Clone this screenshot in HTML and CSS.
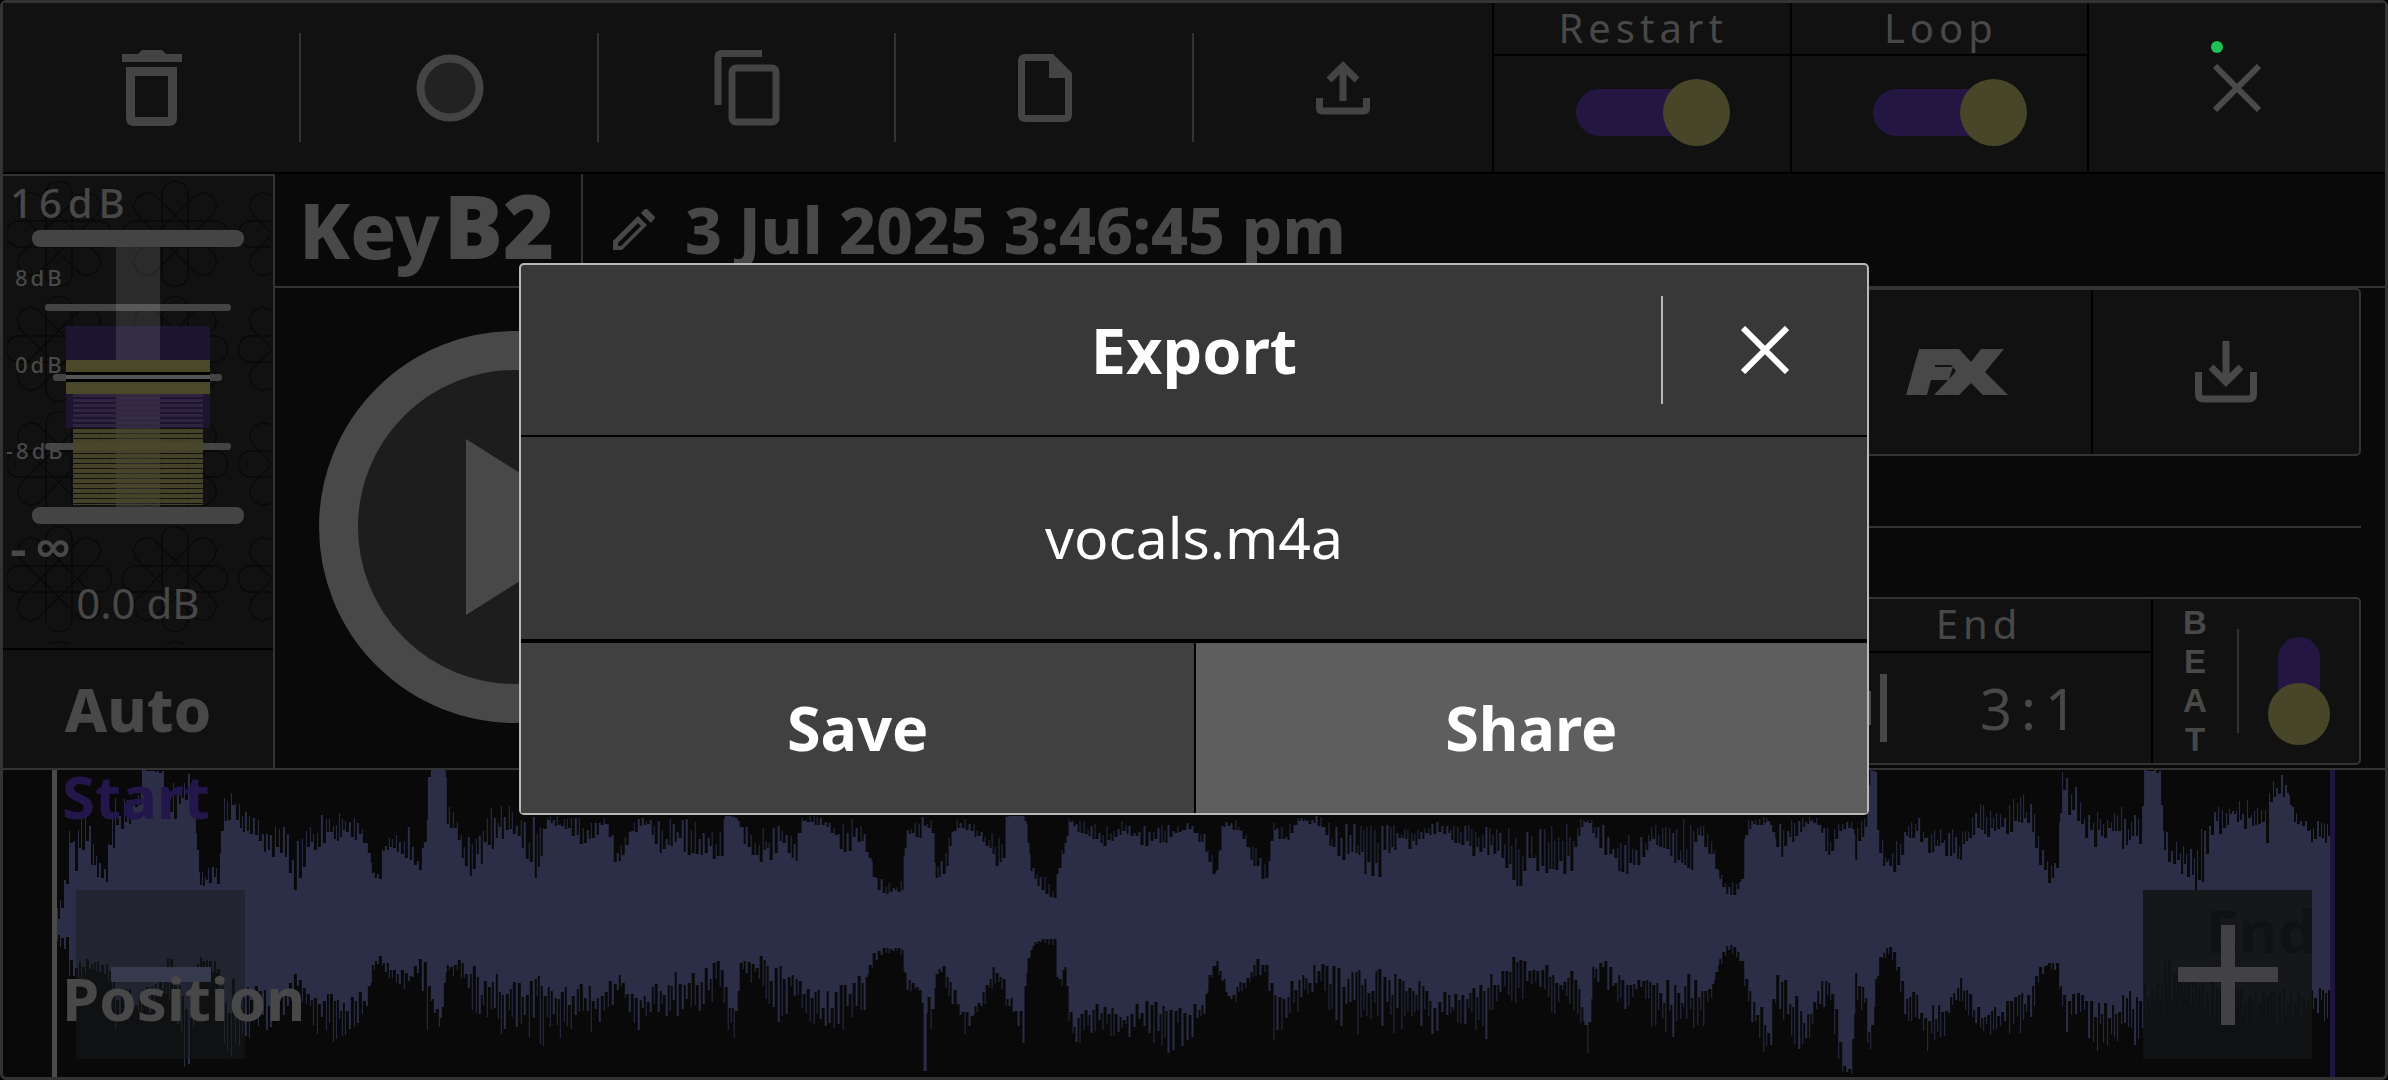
FILE: index.html
```html
<!DOCTYPE html>
<html lang="en">
<head>
<meta charset="utf-8">
<title>Track editor</title>
<link rel="stylesheet" href="styles.css">
</head>
<body>
<main class="app">
  <nav class="toolbar">
    <button class="tool" aria-label="Delete"><svg width="60" height="76" viewBox="0 0 60 76"><path fill="currentColor" fill-rule="evenodd" d="M0 4h16l4-4h20l4 4h16v8H0zM4 17h51v51q0 8-8 8H12q-8 0-8-8zM13 26v41h33V26z"/></svg></button>
    <button class="tool" aria-label="Record"><svg width="68" height="68" viewBox="0 0 68 68"><circle cx="34" cy="34" r="29.5" fill="#222" stroke="currentColor" stroke-width="8"/></svg></button>
    <button class="tool" aria-label="Copy"><svg width="66" height="76" viewBox="0 0 66 76"><path fill="none" stroke="currentColor" stroke-width="7" d="M48 3.500H8q-4 0-4 4V55"/><rect x="18" y="18" width="44" height="54" rx="4" fill="none" stroke="currentColor" stroke-width="7"/></svg></button>
    <button class="tool" aria-label="New file"><svg width="54" height="68" viewBox="0 0 54 68"><path fill="currentColor" fill-rule="evenodd" d="M7 0h28l19 19v42q0 7-7 7H7q-7 0-7-7V7q0-7 7-7zM7 7v54h40V24H31V7z"/></svg></button>
    <button class="tool" aria-label="Export"><svg width="54" height="54" viewBox="0 0 54 54"><path fill="none" stroke="currentColor" stroke-width="7" d="M27 40V5M13 19 27 5l14 14M3.500 37v10q0 3 3 3h41q3 0 3-3V37"/></svg></button>
    <div class="option"><label for="restart" class="option-name">Restart</label><div class="option-body"><input id="restart" class="switch" type="checkbox" checked></div></div>
    <div class="option"><label for="loop" class="option-name">Loop</label><div class="option-body"><input id="loop" class="switch" type="checkbox" checked></div></div>
    <button class="tool close" aria-label="Close"><svg width="48" height="48" viewBox="0 0 48 48"><path fill="none" stroke="currentColor" stroke-width="6" d="M2 2l44 44M46 2 2 46"/></svg><span class="status"></span></button>
  </nav>

  <div class="middle">
    <aside class="volume">
      <div class="meter">
        <svg width="270" height="472" viewBox="0 0 270 472">
          <defs>
            <path id="petal" d="M-13 0V-43L-9-50 0-53 9-50 13-43V0"/>
            <pattern id="rosette" width="116" height="115" patternUnits="userSpaceOnUse">
              <g fill="none" stroke="#080808" stroke-width="1.500" transform="translate(56 58)">
                <use href="#petal"/><use href="#petal" transform="rotate(45)"/><use href="#petal" transform="rotate(90)"/><use href="#petal" transform="rotate(135)"/><use href="#petal" transform="rotate(180)"/><use href="#petal" transform="rotate(225)"/><use href="#petal" transform="rotate(270)"/><use href="#petal" transform="rotate(315)"/>
              </g>
            </pattern>
            <pattern id="levels" width="10" height="5" y="218" patternUnits="userSpaceOnUse"><rect width="10" height="4" fill="#49472a"/></pattern>
            <pattern id="levelsover" width="10" height="5" y="218" patternUnits="userSpaceOnUse"><rect width="10" height="3" fill="#322840"/></pattern>
          </defs>
          <rect x="4" width="264" height="468" fill="url(#rosette)"/>
          <g fill="#444">
            <rect x="29" y="54" width="212" height="17" rx="8"/>
            <rect x="42" y="128" width="186" height="7" rx="3"/>
            <rect x="50" y="198" width="169" height="7" rx="3"/>
          </g>
          <rect x="63" y="150" width="144" height="102" fill="#1d1430"/>
          <rect x="113" y="71" width="44" height="260" fill="#fff" fill-opacity=".11"/>
          <rect x="70" y="218" width="130" height="34" fill="url(#levelsover)" fill-opacity=".85"/>
          <rect x="70" y="252" width="130" height="77" fill="url(#levels)" fill-opacity=".9"/>
          <rect x="42" y="267" width="186" height="7" rx="3" fill="#444"/>
          <rect x="70" y="267" width="130" height="7" fill="#49472a"/>
          <rect x="63" y="184" width="144" height="34" fill="#49492a"/>
          <rect x="63" y="196" width="144" height="10" fill="#000"/>
          <rect x="63" y="199" width="144" height="4" fill="#555"/>
          <rect x="29" y="331" width="212" height="17" rx="8" fill="#444"/>
          <g class="scale">
            <text x="7" y="42" class="scale-big">16dB</text>
            <text x="12" y="110">8dB</text>
            <text x="12" y="197">0dB</text>
            <text x="3" y="283">-8dB</text>
            <text x="7" y="391" class="scale-inf">-∞</text>
            <text x="135" y="443" class="scale-value">0.0 dB</text>
          </g>
        </svg>
        <input class="fader" type="range" min="-60" max="16" value="0" aria-label="Volume">
      </div>
      <button class="auto">Auto</button>
    </aside>

    <section class="track">
      <header class="track-head">
        <h1 class="name">Key<strong>B2</strong></h1>
        <button class="rename" aria-label="Rename"><svg width="42" height="42" viewBox="0 0 42 42"><path fill="currentColor" fill-rule="evenodd" d="M0 32 25 7l9 9L9 41H0zM5 34v3h3L28 17l-3-3zM28 4l4-4 2 0 8 8v1l-4 5z"/></svg></button>
        <h2 class="date">3 Jul 2025 3:46:45 pm</h2>
      </header>
      <div class="track-body">
        <button class="play" aria-label="Play"><svg width="392" height="392" viewBox="0 0 392 392"><circle cx="196" cy="196" r="176.500" fill="#1d1d1d" stroke="currentColor" stroke-width="39"/><path fill="currentColor" d="M147 108 287 196 147 284z"/></svg></button>
        <div class="controls">
          <div class="panel actions">
            <button class="action" aria-label="Effects"><svg width="102" height="46" viewBox="0 0 102 46"><path fill="currentColor" fill-rule="evenodd" d="M13 0H53L65 13 75 0H98L79 23 102 46H77L65 34 53 46H28L42 31H25L21 46H0zM29 16H45L50 22 46 27 43 30 47 18H29z"/></svg></button>
            <button class="action" aria-label="Download"><svg width="62" height="62" viewBox="0 0 62 62"><path fill="none" stroke="currentColor" stroke-width="7" d="M31 0V41M16 26 31 41 46 26M3.500 31V53q0 5 5 5H53.500q5 0 5-5V31"/></svg></button>
          </div>
          <hr class="rule">
          <div class="panel timing">
            <div class="end">
              <div class="end-name">End</div>
              <div class="end-body"><svg width="30" height="68" viewBox="0 0 30 68"><path fill="#484848" d="M0 17h14v34H0zM23 0h7v68h-7z"/></svg><output class="end-value">3:1</output></div>
            </div>
            <div class="beat">
              <label for="beat" class="beat-name"><span>B</span><span>E</span><span>A</span><span>T</span></label>
              <div class="beat-body"><input id="beat" class="switch upright" type="checkbox"></div>
            </div>
          </div>
        </div>
      </div>
    </section>
  </div>

  <section class="wave">
    <svg class="wave-shape" viewBox="57 0 2274 307" preserveAspectRatio="none"><path id="wave" fill="#2c2e48"/></svg>
    <span class="mark mark-start">Start</span>
    <span class="mark mark-end">End</span>
    <button class="zoom zoom-out" aria-label="Zoom out"><svg width="100" height="100" viewBox="0 0 100 100"><path fill="#353a4c" d="M0 42h100v15H0z"/></svg></button>
    <button class="zoom zoom-in" aria-label="Zoom in"><svg width="100" height="100" viewBox="0 0 100 100"><path fill="#424244" d="M43 0h14v42h43v15H57v43H43V57H0V42h43z"/></svg></button>
    <span class="mark mark-position">Position</span>
  </section>
</main>

<div class="backdrop">
  <section class="dialog" role="dialog" aria-labelledby="export-title">
    <header class="dialog-head">
      <h2 id="export-title" class="dialog-title">Export</h2>
      <button class="dialog-close" aria-label="Close dialog"><svg width="48" height="48" viewBox="0 0 48 48"><path fill="none" stroke="currentColor" stroke-width="6" d="M2 2l44 44M46 2 2 46"/></svg></button>
    </header>
    <p class="file">vocals.m4a</p>
    <footer class="dialog-foot">
      <button class="choice">Save</button>
      <button class="choice primary">Share</button>
    </footer>
  </section>
</div>
<script src="wave.js"></script>
</body>
</html>
```
FILE: styles.css
```css
* { box-sizing: border-box; }
body { margin: 0; background: #000; color: #484848; font-family: "Noto Sans", "Open Sans", sans-serif; }
button { margin: 0; padding: 0; border: 0; background: none; color: inherit; font: inherit; }
h1, h2, p { margin: 0; }
svg { display: block; flex: none; }

.app { min-height: 100vh; display: flex; flex-direction: column; border: 3px solid #333; border-radius: 6px; background: #090909; }

.toolbar { display: grid; grid-template-columns: repeat(8, 1fr); height: 171px; background: #111; border-bottom: 2px solid #000; }
.tool { position: relative; display: flex; align-items: center; justify-content: center; color: #444; }
.tool:nth-child(-n+4)::after { content: ""; position: absolute; right: 0; top: 30px; bottom: 30px; width: 2px; background: #333; }
.option { display: flex; flex-direction: column; border-left: 2px solid #000; }
.option-name { height: 53px; border-bottom: 2px solid #000; padding-left: 3px; text-align: center; font-size: 40px; line-height: 49px; letter-spacing: 5px; }
.option-body { flex: 1; display: flex; align-items: center; justify-content: center; padding: 0 0 4px 22px; }
.close { border-left: 2px solid #000; color: #4a4a4a; }
.status { position: absolute; left: calc(50% - 26px); top: 38px; width: 12px; height: 12px; border-radius: 50%; background: #1fc055; }

.switch { appearance: none; position: relative; margin: 0; width: 154px; height: 67px; }
.switch::before { content: ""; position: absolute; left: 0; right: 30px; top: 10px; bottom: 10px; border-radius: 24px; background: #231643; }
.switch::after { content: ""; position: absolute; right: 0; top: 0; width: 67px; height: 67px; border-radius: 50%; background: #484628; }
.upright { width: 62px; height: 108px; }
.upright::before { left: 10px; right: 10px; top: 0; bottom: 30px; }
.upright::after { top: auto; bottom: 0; width: 62px; height: 62px; }

.middle { display: grid; grid-template-columns: 272px 1fr; height: 596px; border-bottom: 2px solid #333; }
.volume { display: flex; flex-direction: column; background: #111; border-top: 2px solid #333; border-right: 2px solid #333; }
.meter { position: relative; height: 472px; }
.scale { fill: #484848; font-size: 22px; font-weight: 500; letter-spacing: 3px; }
.scale-big { font-size: 40px; letter-spacing: 6px; }
.scale-inf { font-size: 52px; font-weight: 600; letter-spacing: 8px; }
.scale-value { font-size: 42px; font-weight: 400; letter-spacing: 0; text-anchor: middle; }
.fader { position: absolute; inset: 0; width: 100%; height: 100%; margin: 0; opacity: 0; }
.auto { flex: 1; border-top: 2px solid #000; font-size: 60px; font-weight: 800; line-height: 114px; }

.track { display: flex; flex-direction: column; }
.track-head { display: flex; align-items: stretch; height: 114px; border-bottom: 2px solid #333; }
.name { width: 308px; border-right: 2px solid #333; padding-left: 24px; font-size: 76px; font-weight: 800; line-height: 112px; white-space: nowrap; }
.name strong { font-size: 88px; font-weight: 900; line-height: 80px; padding-left: 4px; }
.rename { width: 102px; display: flex; align-items: center; justify-content: center; }
.date { font-size: 64px; font-weight: 800; line-height: 112px; white-space: nowrap; }
.track-body { flex: 1; display: flex; align-items: center; gap: 42px; padding: 0 24px 3px 44px; }
.play { color: #484848; }
.controls { flex: 1; align-self: stretch; display: flex; flex-direction: column; justify-content: space-between; }
.panel { height: 168px; display: flex; justify-content: flex-end; border: 2px solid #333; border-radius: 5px; background: #111; }
.action { width: 268px; display: flex; align-items: center; justify-content: center; }
.action + .action { border-left: 2px solid #000; }
.rule { width: 100%; height: 2px; margin: 0; border: 0; background: #333; }
.end { width: 350px; display: flex; flex-direction: column; }
.end-name { height: 54px; border-bottom: 2px solid #000; padding-left: 6px; text-align: center; font-size: 40px; line-height: 50px; letter-spacing: 5px; }
.end-body { flex: 1; display: flex; align-items: center; padding-left: 56px; }
.end-value { flex: 1; text-align: center; font-size: 56px; letter-spacing: 9px; padding-left: 28px; }
.beat { width: 208px; display: flex; align-items: center; border-left: 2px solid #000; }
.beat-name { width: 86px; height: 104px; display: flex; flex-direction: column; align-items: center; justify-content: center; border-right: 2px solid #333; font-family: "Liberation Sans", sans-serif; font-size: 33px; font-weight: 700; line-height: 39px; }
.beat-body { flex: 1; display: flex; justify-content: center; padding-top: 20px; }

.wave { position: relative; flex: 1; min-height: 300px; margin: 0 50px 0 49px; border-left: 5px solid #4a4a4a; border-right: 5px solid #20153f; }
.wave-shape { position: absolute; inset: 0; width: 100%; height: 100%; }
.mark { position: absolute; font-size: 60px; font-weight: 700; line-height: 64px; color: #484848; }
.mark-start { left: 5px; top: -6px; color: #22164a; }
.mark-position { left: 5px; bottom: 47px; }
.mark-end { right: 14px; top: 128px; color: #0c0a16; }
.zoom { position: absolute; top: 120px; width: 169px; height: 169px; display: flex; align-items: center; justify-content: center; }
.zoom-out { left: 19px; background: rgba(24, 26, 28, .5); }
.zoom-in { right: 18px; background: rgba(18, 19, 20, .85); }

.backdrop { position: fixed; inset: 0; display: grid; place-items: center; padding-bottom: 2px; }
.dialog { width: 56.5%; border: 2px solid #b8b8b8; border-radius: 5px; background: #383838; color: #fff; }
.dialog-head { display: flex; align-items: center; height: 172px; border-bottom: 2px solid #000; }
.dialog-title { flex: 1; padding-left: 206px; text-align: center; font-size: 63px; font-weight: 700; line-height: 172px; }
.dialog-close { width: 206px; height: 108px; display: flex; align-items: center; justify-content: center; border-left: 2px solid #b8b8b8; }
.file { height: 206px; border-bottom: 4px solid #000; text-align: center; font-size: 57px; line-height: 200px; }
.dialog-foot { display: grid; grid-template-columns: 1fr 1fr; }
.choice { height: 170px; background: #404040; font-size: 61px; font-weight: 700; line-height: 168px; }
.primary { border-left: 2px solid #000; background: #5e5e5e; }
```
FILE: wave.js
```js
// Envelope rows: x, upper peak, upper floor, lower floor, lower peak.
// Three strips of the recording, each with its own start position.
const strips = [
  [0, `115 400 480 520 560,130 330 370 540 600,135 190 270 590 650,150 200 340 610 670,165 100 250 600 660,178 230 320 600 640,207 320 385 610 650,216 150 250 620 690,223 100 250 640 948,228 100 240 680 800,240 110 200 690 780,260 70 180 690 830,276 60 160 700 780,278 30 30 700 780,318 30 40 650 720,322 50 150 600 690,345 60 200 610 800,358 30 110 700 948,378 50 140 700 948,385 200 260 600 700,390 320 380 580 620,430 320 370 620 670,434 70 180 650 948,440 90 200 680 920,456 70 150 680 890,470 130 200 690 880,500 175 260 690 820,530 190 300 720 830,555 200 270 700 780,575 240 390 640 680,600 210 290 700 750,620 150 270 710 840,650 160 240 720 860,672 120 230 730 840,700 170 240 700 800,718 240 260 700 770,730 310 350 610 660,742 340 370 580 620,750 250 280 600 640,770 220 280 630 690,800 200 290 640 690,822 310 340 600 640,836 150 200 640 850,838 150 200 680 800,839 30 30 680 700,862 30 30 770 830,874 30 30 620 660,875 160 200 610 640,885 70 200 610 640,900 210 280 600 680,920 230 340 630 750,950 140 290 660 820,985 130 230 670 840,1020 150 270 670 830,1050 150 360 600 850,1072 160 190 680 880,1110 170 220 690 830,1150 175 260 680 830,1185 165 190 690 850,1198 170 300 670 750,1210 270 330 640 690,1225 230 260 690 720,1240 170 220 700 830,1270 165 210 700 800,1300 170 290 670 770,1330 170 270 650 800,1360 180 290 640 790,1390 190 290 630 740,1412 200 320 600 720,1420 168 170 680 790,1440 168 170 760 860,1452 168 230 580 640,1490 200 330 600 700,1530 190 250 640 800,1560 220 340 640 700`],
  [800, `0 168 190 670 760,20 168 190 680 840,50 170 200 700 850,80 170 270 680 820,105 170 270 680 800,120 190 240 660 810,135 260 310 600 660,150 350 390 570 600,175 360 410 560 580,200 350 400 570 590,208 190 240 650 690,235 170 230 690 700,239 170 230 690 700,240 170 200 940 948,243 170 200 940 948,245 170 220 700 760,258 175 220 720 840,265 310 350 650 690,275 310 370 600 640,290 190 310 630 710,305 170 200 700 760,325 175 210 760 830,350 200 240 730 780,380 210 320 620 690,398 230 330 640 700,402 168 170 700 760,430 168 168 740 820,437 168 168 760 920,443 168 200 620 680,455 310 360 550 570,475 340 420 535 550,500 390 430 530 560,505 300 340 640 730,520 240 260 600 640,527 170 190 760 800,540 175 210 780 890,570 180 240 720 830,600 190 270 740 830,630 175 220 750 860,660 190 250 740 810,690 200 260 710 850,720 190 250 730 880,760 180 220 740 850,790 200 260 740 790,800 250 300 660 710,815 310 370 580 620,828 190 210 650 690,840 175 200 700 740,860 180 220 670 740,880 230 290 630 690,900 270 340 590 640,918 290 370 600 720,925 170 200 720 860,940 180 240 690 860,955 190 270 680 780,975 168 180 670 770,1020 168 200 600 720,1050 180 310 640 790,1090 190 320 650 830,1130 190 350 650 810,1160 190 270 650 840,1200 180 260 660 780,1240 180 230 700 830,1280 190 240 710 810,1320 190 290 680 810,1345 190 300 640 840,1370 190 290 640 740,1400 210 380 600 760,1440 190 350 600 720,1480 180 320 640 780,1510 190 340 600 740,1535 170 190 740 800,1543 170 180 800 930,1555 170 230 640 680`],
  [1588, `10 170 230 620 690,30 190 280 580 660,50 190 330 640 740,75 220 330 650 760,100 240 340 650 700,125 190 240 680 800,160 170 300 680 860,200 175 370 660 830,215 180 230 660 880,240 210 280 690 760,255 310 350 600 640,275 360 410 550 580,300 360 400 580 610,310 190 220 650 700,320 170 200 720 780,345 170 190 760 890,355 170 180 820 900,370 190 300 640 720,395 180 260 700 870,430 170 190 760 870,445 170 190 730 790,455 180 210 660 780,475 210 310 670 700,490 180 220 760 940,500 180 220 920 948,515 170 200 930 948,519 170 200 860 940,525 200 310 640 710,545 170 200 700 780,553 30 30 800 948,566 30 40 640 700,568 200 260 620 680,575 200 300 580 620,590 240 370 550 590,608 240 330 610 660,620 210 250 690 760,645 165 230 720 830,665 180 270 740 880,700 190 290 740 830,730 220 310 660 730,745 200 240 690 760,765 120 220 750 850,800 150 230 740 830,830 110 220 730 820,855 90 190 710 830,875 150 230 670 750,885 230 320 620 690,900 280 370 600 620,920 300 340 610 640,930 30 100 690 740,942 60 160 730 850,965 90 210 680 780,990 140 260 740 890,1030 130 240 730 850,1060 150 270 720 880,1087 180 250 690 830,1089 30 30 680 800,1121 30 40 640 780,1130 190 280 600 780,1160 230 350 620 760,1200 210 390 660 760,1235 100 220 680 800,1260 130 180 690 800,1285 110 200 690 800,1315 130 190 690 800,1330 110 260 690 800,1342 30 110 690 800,1372 40 140 690 800,1385 130 200 690 800,1420 180 240 690 800,1455 190 250 640 780`]
];

const points = strips.flatMap(([start, rows]) => rows.split(",").map(row => {
  const [x, ...levels] = row.trim().split(" ").map(Number);
  return [start + x / 1.96, ...levels.map(v => v / 3 - 10)];
})).sort((a, b) => a[0] - b[0]);

let seed = 7;
const random = () => (seed = (seed * 16807) % 2147483647) / 2147483647;

function sample(x) {
  let i = 1;
  while (i < points.length - 1 && points[i][0] < x) i++;
  const a = points[i - 1], b = points[i];
  const t = Math.max(0, Math.min(1, (x - a[0]) / (b[0] - a[0])));
  return a.map((v, k) => v + (b[k] - v) * t);
}

// Columns alternate between a tall beat and its shorter neighbours.
let path = "";
for (let x = 57, n = 0; x < 2331; n++) {
  const tall = n % 2 === 0;
  const width = tall ? 1 + Math.round(random() * .7) : 2 + Math.round(random());
  const [, peak, floor, lowFloor, lowPeak] = sample(x);
  const up = tall ? random() * .6 : .6 + random() * .5;
  const down = tall ? .4 + random() * .6 : random() * .5 - .15;
  const top = Math.round(peak + (floor - peak) * up);
  const bottom = Math.round(lowFloor + (lowPeak - lowFloor) * down);
  path += `M${x} ${top}h${width}V${bottom}h-${width}z`;
  x += width;
}
document.getElementById("wave").setAttribute("d", path);
```
